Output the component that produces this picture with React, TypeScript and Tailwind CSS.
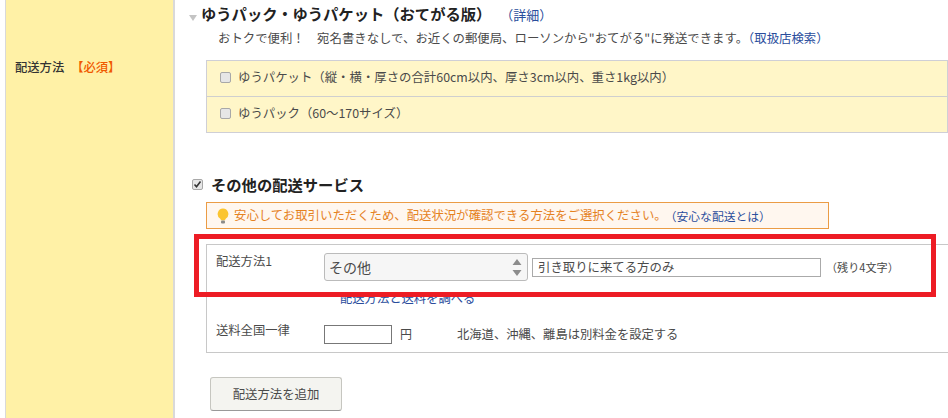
function Check({ checked, className }: { checked?: boolean; className: string }) {
  return (
    <span className={`flex shrink-0 items-center justify-center rounded-[2px] border border-[#a8a8a8] bg-[#e6e6e6] ${className}`}>
      {checked && (
        <svg width="9" height="9" viewBox="0 0 9 9">
          <path d="M1.5 4.5l2 2.2L7.5 1.5" fill="none" stroke="#333" strokeWidth="1.6" />
        </svg>
      )}
    </span>
  )
}

export default function App() {
  return (
    <div className="relative flex h-[418px] w-[948px] overflow-hidden bg-white text-[12.4px] text-[#4a4a4a] font-['Noto_Sans_CJK_JP','Noto_Sans',sans-serif]">
      {/* ラベル列 */}
      <div className="ml-[5px] flex w-[170px] shrink-0 items-start border-r-2 border-l-[1px] border-[#d9d9d9] bg-[#fff1a6] pl-[9px] pt-[58px] text-[12.3px] font-medium text-[#333]">
        <span>配送方法</span>
        <span className="ml-[7px] text-[#f05a00]">【必須】</span>
      </div>

      <div className="min-w-0 flex-1">
        {/* ゆうパック */}
        <div className="ml-[13px] flex h-[28px] items-center">
          <svg width="10" height="8" viewBox="0 0 10 8" className="mt-[8px]">
            <path d="M1 1h8L5 7z" fill="#c4c4c4" />
          </svg>
          <span className="mb-[1px] ml-[3px] text-[15.3px] font-bold text-[#222]">ゆうパック・ゆうパケット（おてがる版）</span>
          <a className="ml-[9px] mt-[1px] text-[13px] text-[#2a4d9c]">（詳細）</a>
        </div>
        <p className="ml-[43px] h-[20px] whitespace-nowrap leading-[20px]">
          おトクで便利！　宛名書きなしで、お近くの郵便局、ローソンから"おてがる"に発送できます。
          <a className="text-[#2a4d9c]">（取扱店検索）</a>
        </p>
        <div className="ml-[31px] mt-[12px] border border-[#cfcfd6] bg-[#fff6c8]">
          <label className="flex h-[36px] items-center border-b border-[#cfcfcf] pb-[2px] pl-[13px]">
            <Check className="h-[11px] w-[11px]" />
            <span className="ml-[7px] whitespace-nowrap">ゆうパケット（縦・横・厚さの合計60cm以内、厚さ3cm以内、重さ1kg以内）</span>
          </label>
          <label className="flex h-[35px] items-center pb-[2px] pl-[13px]">
            <Check className="h-[11px] w-[11px]" />
            <span className="ml-[7px] whitespace-nowrap">ゆうパック（60〜170サイズ）</span>
          </label>
        </div>

        {/* その他の配送サービス */}
        <div className="ml-[17px] mt-[39px] flex h-[24px] items-center">
          <Check checked className="h-[11px] w-[11px]" />
          <span className="ml-[8px] text-[15.3px] font-bold text-[#222]">その他の配送サービス</span>
        </div>
        <div className="ml-[31px] mt-[6px] flex h-[27px] w-[623px] items-center border border-[#eb9c45] bg-[#fff7ef] pl-[10px] text-[#e5821f]">
          <svg width="12" height="16" viewBox="0 0 12 16" className="shrink-0">
            <path d="M6 .5a5.5 5.5 0 0 0-3 10c.6.5.8 1 .9 1.7h4.2c.1-.7.3-1.2.9-1.7a5.5 5.5 0 0 0-3-10z" fill="#fbc531" />
            <rect x="4" y="12.5" width="4" height="3" rx="1" fill="#8a8a8a" />
          </svg>
          <span className="ml-[5px] whitespace-nowrap">安心してお取引いただくため、配送状況が確認できる方法をご選択ください。</span>
          <a className="-ml-[2px] whitespace-nowrap text-[11.8px] text-[#2a4d9c]">（安心な配送とは）</a>
        </div>

        {/* 配送方法フォーム */}
        <div className="ml-[31px] mt-[15px] h-[109px] border border-r-0 border-[#c8c8c8] pl-[9px]">
          <div className="flex items-start pt-[8px]">
            <span className="w-[108px] shrink-0 text-[12.3px] leading-[16px]">配送方法1</span>
            <div className="flex h-[28px] w-[204px] shrink-0 items-center justify-between rounded-[3px] border border-[#bbb] bg-[#f6f6f6] pl-[4px] pr-[5px] text-[14px]">
              <span>その他</span>
              <svg width="10" height="17" viewBox="0 0 10 17">
                <path d="M5 0l4.5 6H.5zM.5 11h9L5 17z" fill="#8c8c8c" />
              </svg>
            </div>
            <input
              defaultValue="引き取りに来てる方のみ"
              className="ml-[4px] mt-[5px] h-[19px] w-[289px] border border-[#aaa] bg-white px-[5px] pb-[1px] text-[12.4px] text-[#4a4a4a] outline-none"
            />
            <span className="ml-[5px] mt-[6px] whitespace-nowrap text-[11.1px]">（残り4文字）</span>
          </div>
          <a className="ml-[124px] mt-[9px] block text-[12.3px] leading-[16px] text-[#2a4d9c]">配送方法と送料を調べる</a>
          <div className="mt-[16px] flex items-start">
            <span className="w-[108px] shrink-0 text-[12.3px] leading-[16px]">送料全国一律</span>
            <input className="mt-[3px] h-[19px] w-[68px] border border-[#777] bg-white outline-none" />
            <span className="ml-[8px] mt-[3px] text-[12px]">円</span>
            <span className="ml-[45px] mt-[3px] whitespace-nowrap text-[12.3px]">北海道、沖縄、離島は別料金を設定する</span>
          </div>
        </div>
        <button className="ml-[35px] mt-[24px] h-[34px] w-[132px] rounded-[3px] border border-[#c6c6c0] border-b-[#999] bg-[#f4f4f0]">
          配送方法を追加
        </button>
      </div>

      {/* 赤枠の注釈 */}
      <div className="absolute left-[194px] top-[234px] h-[63px] w-[742px] border-[5px] border-[#ed1c24]" />
    </div>
  )
}
